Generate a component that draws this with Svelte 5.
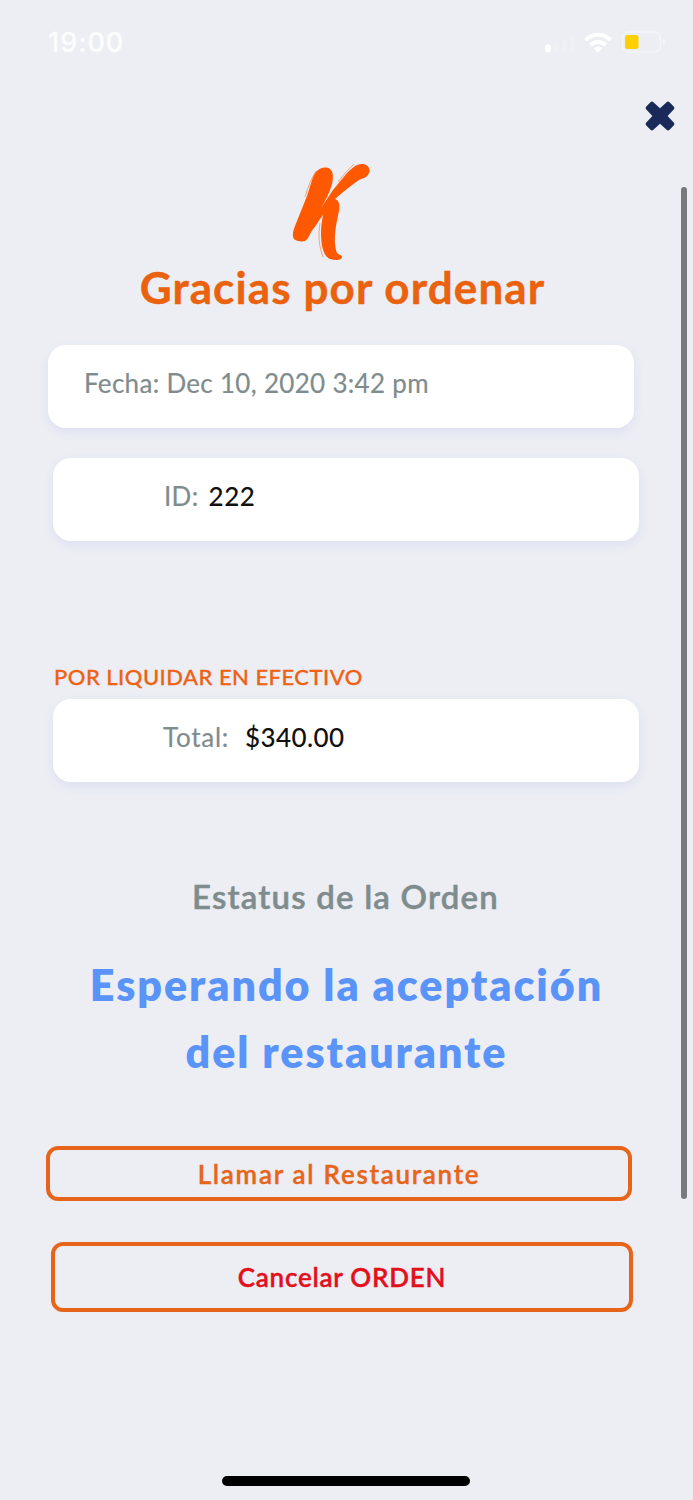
<script lang="ts">
	const time: string = "19:00";
	const order = {
		date: "Dec 10, 2020 3:42 pm",
		id: "222",
		total: "$340.00"
	};
	let open: boolean = true;
	const close = () => (open = false);
</script>

<div class="screen">
	<header class="status">
		<span class="status__time">{time}</span>
		<div class="status__icons">
			<svg class="signal" width="32" height="18" viewBox="0 0 32 18" fill="#fff">
				<rect x="0" y="9.500" width="6" height="8" rx="2.500" />
				<g opacity="0.15">
					<rect x="9" y="7" width="5" height="10" rx="1.500" />
					<rect x="17" y="4" width="5" height="13" rx="1.500" />
					<rect x="25" y="0" width="5" height="17" rx="1.500" />
				</g>
			</svg>
			<svg class="wifi" width="28" height="21" viewBox="0 0 28 21" fill="none" stroke="#fff" stroke-width="4">
				<path d="M1.500 8C8.500 1 19.500 1 26.500 8" />
				<path d="M6.500 13C10.800 8.900 17.200 8.900 21.500 13" />
				<path d="M14 20.500L9.800 16.300C12.200 14 15.800 14 18.200 16.300Z" fill="#fff" stroke="none" />
			</svg>
			<svg class="battery" width="44" height="22" viewBox="0 0 44 22">
				<rect x="0.500" y="1" width="38" height="20" rx="6" fill="none" stroke="#f4f5f8" stroke-width="1.500" />
				<path d="M41 7.500C44 9 44 13 41 14.500Z" fill="#f4f5f8" />
				<rect x="3" y="4" width="13.500" height="14" rx="2.500" fill="#fdd000" />
			</svg>
		</div>
	</header>

	<button class="close" aria-label="Cerrar" on:click={close}>
		<svg width="30" height="30" viewBox="0 0 30 30">
			<path
				d="M21.600 1.200L15 7.200L8.400 1.200Q7 -0.100 5.500 1.200L1.300 5.400Q0 6.900 1.300 8.400L7.400 15L1.300 21.600Q0 23.100 1.300 24.600L5.500 28.800Q7 30.100 8.400 28.800L15 22.800L21.600 28.800Q23 30.100 24.500 28.800L28.700 24.600Q30 23.100 28.700 21.600L22.600 15L28.700 8.400Q30 6.900 28.700 5.400L24.500 1.200Q23 -0.100 21.600 1.200Z"
				fill="#192a5a"
			/>
		</svg>
	</button>

	{#if open}
		<main>
			<svg class="logo" width="80" height="100" viewBox="0 0 80 100" fill="#fe5800">
				<path
					d="M26 10C29 6 36 4 40 7C44 10 43 17 42 22C40 30 35 39 31 46C35 40 39 34 43 28L57 11C61 7 66 2 72 2C77 2 81 6 79 11C77 16 73 16 69 18C60 24 52 31 45 37C49 38 50 43 49 49C48 54 47 58 46 64C45 71 44 80 46 88C47 94 52 92 52 95C52 98 46 99 40 97C33 94 31 82 31 71C31 64 32 59 33 53C29 58 27 62 24 66C20 70 19 77 15 79C11 80 6 79 4 77C2 74 3 69 5 64L17 34C20 26 22 15 26 10Z"
				/>
				<path
					d="M26 9C21 17 18 25 15 35M64 2C58 8 53 13 48 20M30 61C28 73 29 85 33 95"
					fill="none"
					stroke="#fe5800"
					opacity="0.5"
				/>
			</svg>
			<h1>Gracias por ordenar</h1>

			<section class="card card--date">
				<span class="card__label">Fecha: {order.date}</span>
			</section>
			<section class="card card--id">
				<span class="card__label">ID:</span>
				<span class="card__value">{order.id}</span>
			</section>

			<p class="payment">POR LIQUIDAR EN EFECTIVO</p>
			<section class="card card--total">
				<span class="card__label">Total:</span>
				<span class="card__value">{order.total}</span>
			</section>

			<h2>Estatus de la Orden</h2>
			<p class="state">Esperando la aceptación<br />del restaurante</p>

			<button class="action action--call">Llamar al Restaurante</button>
			<button class="action action--cancel">Cancelar ORDEN</button>
		</main>
	{/if}

	<div class="scrollbar"></div>
	<div class="home"></div>
</div>

<style>
	:global(body) {
		background: #eceef4;
	}
	.screen {
		position: relative;
		display: flex;
		flex-direction: column;
		box-sizing: border-box;
		width: 693px;
		height: 1500px;
		overflow: hidden;
		background: #eceef4;
		font-family: Lato, "Open Sans", sans-serif;
	}
	.status {
		display: flex;
		justify-content: space-between;
		align-items: center;
		height: 84px;
		padding: 0 27px 0 48px;
	}
	.status__time {
		font: 500 27px Inter, sans-serif;
		letter-spacing: 1px;
		color: #fcfcfd;
		-webkit-text-stroke: 0.3px currentColor;
	}
	.status__icons {
		display: flex;
		align-items: center;
	}
	.signal {
		margin-top: 4px;
	}
	.wifi {
		margin-left: 7px;
	}
	.battery {
		margin-left: 10px;
	}
	button {
		padding: 0;
		background: none;
		font-family: inherit;
		cursor: pointer;
	}
	.close {
		align-self: flex-end;
		width: 30px;
		height: 30px;
		margin: 17px 18px 0 0;
		border: 0;
	}
	.close svg {
		display: block;
	}
	main {
		display: flex;
		flex-direction: column;
		margin-top: 31px;
	}
	.logo {
		margin-left: 290px;
	}
	h1 {
		margin: 0 8px 0 0;
		color: #ea610e;
		font-size: 44px;
		font-weight: 700;
		line-height: 50px;
		letter-spacing: 1.12px;
		text-align: center;
		-webkit-text-stroke: 0.4px currentColor;
	}
	.card {
		display: flex;
		align-items: center;
		box-sizing: border-box;
		width: 586px;
		height: 83px;
		margin-left: 53px;
		padding-bottom: 8px;
		border-radius: 18px;
		background: #fff;
		box-shadow: 0 4px 8px rgba(205, 209, 238, 0.45);
		font-size: 26px;
		-webkit-text-stroke: 0.2px currentColor;
	}
	.card--date {
		margin: 33px 0 0 48px;
		padding-left: 36px;
		letter-spacing: 0.3px;
	}
	.card--id {
		margin-top: 30px;
		padding-left: 111px;
	}
	.card--total {
		padding-left: 110px;
	}
	.card__label {
		color: #7f8c8d;
	}
	.card__value {
		color: #111;
		font-weight: 500;
		-webkit-text-stroke-width: 0;
	}
	.card--id .card__label {
		letter-spacing: 0.3px;
	}
	.card--id .card__value {
		margin-left: 10px;
		letter-spacing: 0.6px;
	}
	.card--total .card__label {
		letter-spacing: 0.75px;
	}
	.card--total .card__value {
		margin-left: 16px;
		letter-spacing: 0.4px;
	}
	.payment {
		margin: 121px 0 7px 54px;
		color: #ee6214;
		font-size: 22px;
		font-weight: 500;
		line-height: 30px;
		letter-spacing: 0.47px;
		-webkit-text-stroke: 0.3px currentColor;
	}
	h2 {
		margin: 94px 2px 0 0;
		color: #7f8c8d;
		font-size: 33px;
		font-weight: 600;
		line-height: 40px;
		letter-spacing: 1.18px;
		text-align: center;
		-webkit-text-stroke: 0.5px currentColor;
	}
	.state {
		margin: 35px 0 0;
		color: #5b94f9;
		font-size: 43px;
		font-weight: 800;
		line-height: 67px;
		letter-spacing: 1.95px;
		text-align: center;
	}
	.action {
		box-sizing: border-box;
		border: 4px solid #e7651b;
		border-radius: 12px;
		color: #e7651b;
		font-size: 26px;
		font-weight: 600;
		text-align: center;
		-webkit-text-stroke: 0.4px currentColor;
	}
	.action--call {
		width: 586px;
		height: 55px;
		margin: 61px 0 0 46px;
		letter-spacing: 1.7px;
	}
	.action--cancel {
		width: 582px;
		height: 70px;
		margin: 41px 0 0 51px;
		color: #e3101c;
		letter-spacing: 0.75px;
	}
	.scrollbar {
		position: absolute;
		top: 187px;
		right: 6px;
		width: 6px;
		height: 1012px;
		border-radius: 3px;
		background: #77797d;
	}
	.home {
		width: 248px;
		height: 10px;
		margin: auto 0 14px 222px;
		border-radius: 5px;
		background: #000;
	}
</style>
